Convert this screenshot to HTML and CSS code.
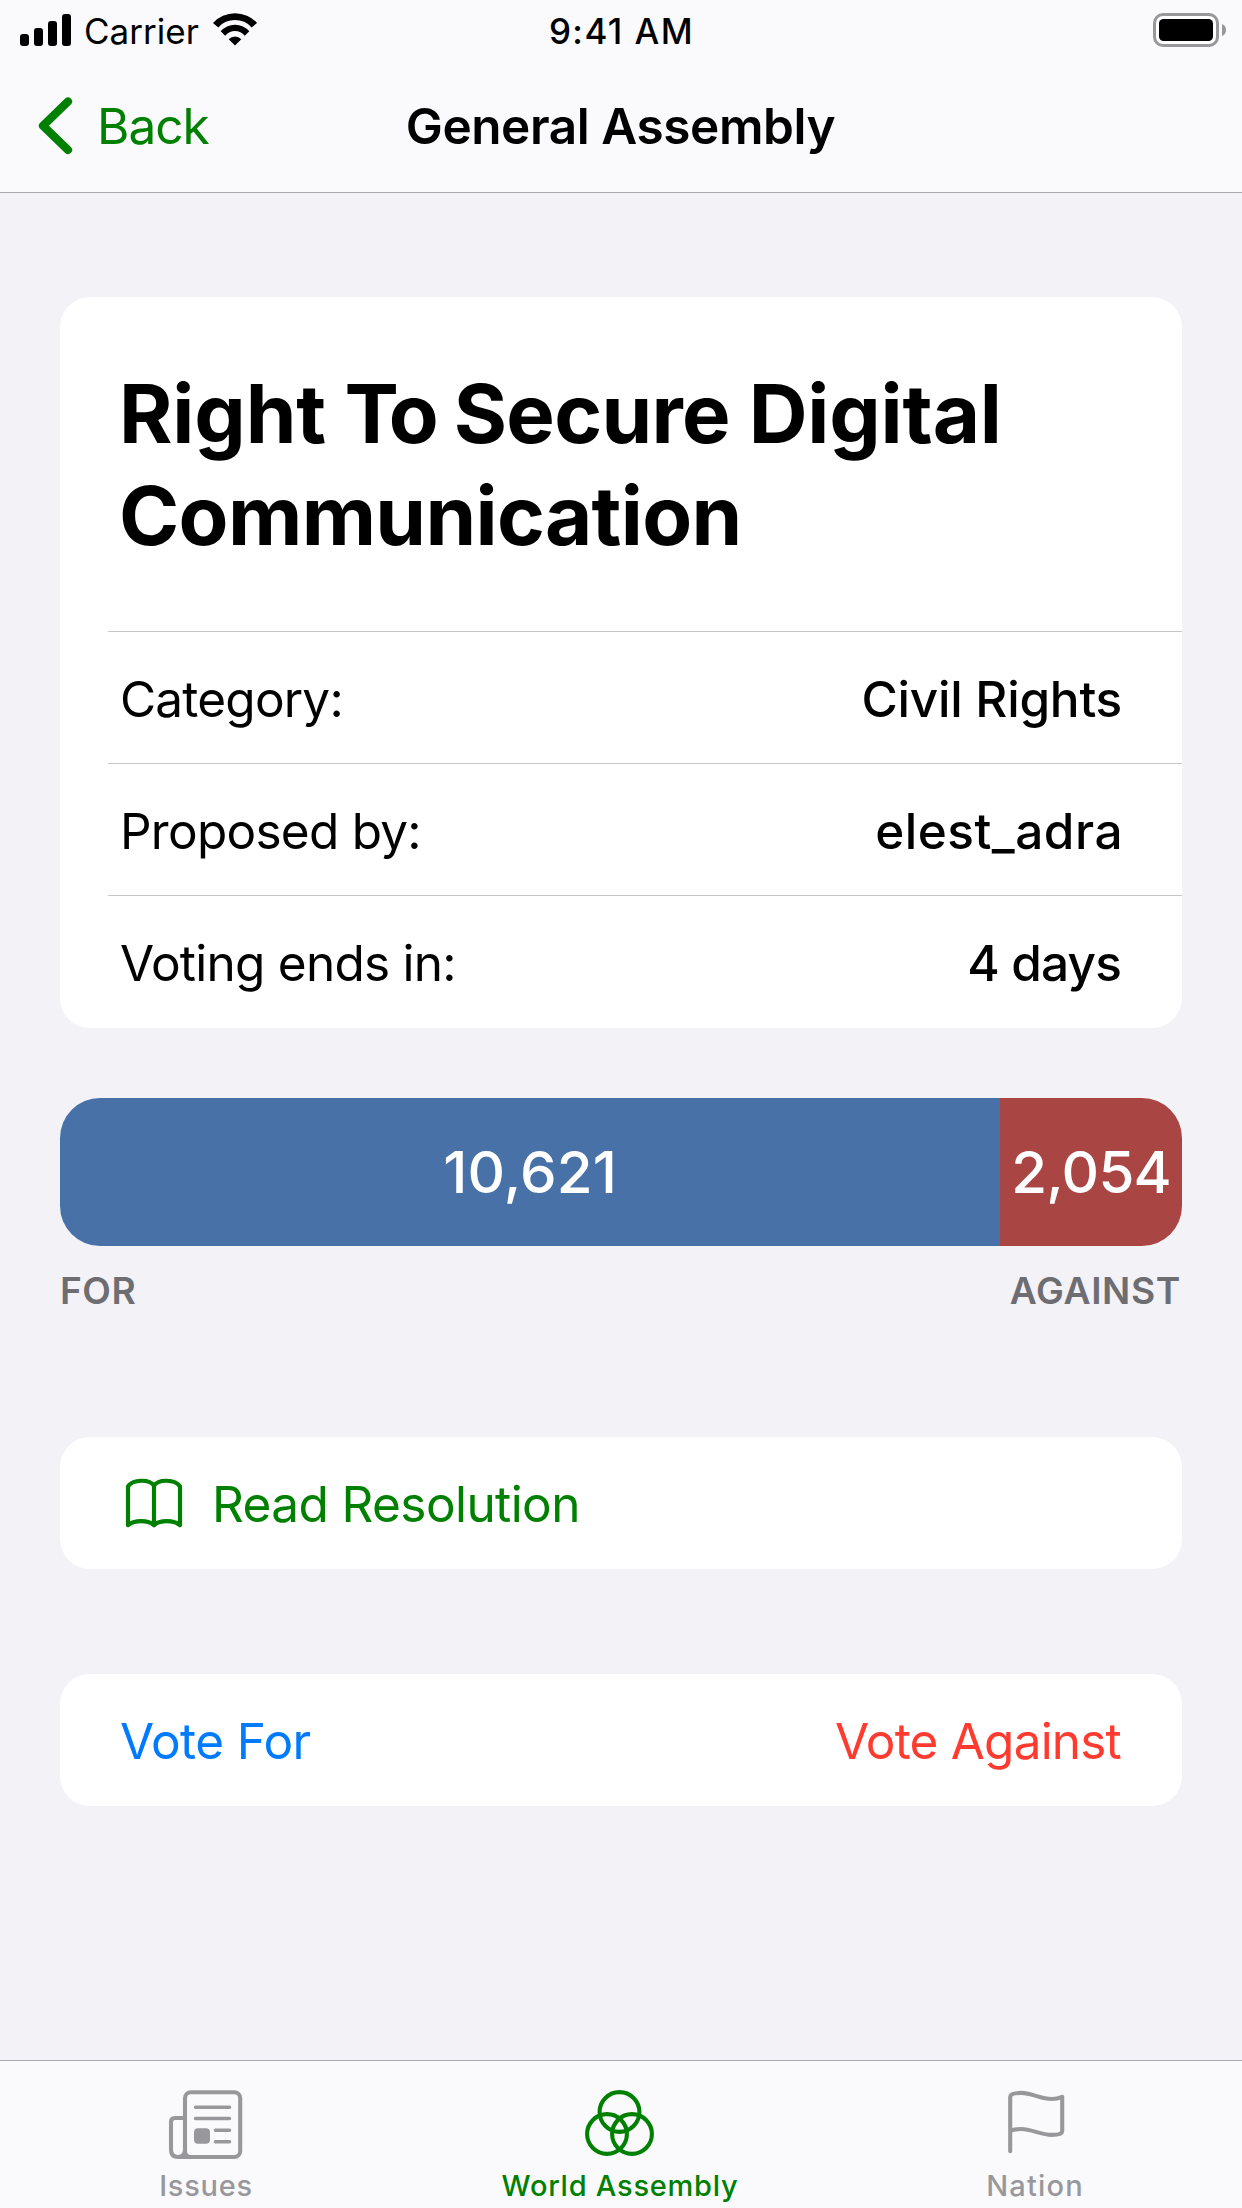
FILE: index.html
```html
<!DOCTYPE html>
<html lang="en">
<head>
<meta charset="utf-8">
<title>General Assembly</title>
<link rel="stylesheet" href="styles.css">
</head>
<body>
<div class="screen">
  <header class="header">
    <div class="status">
      <div class="status-left">
        <svg class="signal" width="52" height="33" viewBox="20 14 52 33">
          <rect x="20" y="34" width="9" height="12" rx="3"/>
          <rect x="34" y="28" width="9" height="18" rx="3"/>
          <rect x="48" y="21" width="9" height="25" rx="3"/>
          <rect x="62" y="14" width="9" height="32" rx="3"/>
        </svg>
        <span class="carrier">Carrier</span>
        <svg class="wifi" width="46" height="34" viewBox="212 13 46 34">
          <path d="M213 22.9A30 30 0 0 1 257 22.9L251.7 27.4A22.3 22.3 0 0 0 218.3 27.4Z"/>
          <path d="M220.7 31.3A18.7 18.7 0 0 1 249.3 31.3L244.8 35.7A12.5 12.5 0 0 0 225.2 35.7Z"/>
          <path d="M228.7 39.3A8.6 8.6 0 0 1 241.3 39.3L235 45.5Z"/>
        </svg>
      </div>
      <span class="time">9:41 AM</span>
      <svg class="battery" width="74" height="34" viewBox="1153 13 74 34">
        <rect class="battery-case" x="1154.5" y="14.5" width="63" height="31" rx="8.5"/>
        <rect x="1159" y="19" width="54" height="22" rx="4.5"/>
        <path class="battery-tip" d="M1222 24Q1226 25.5 1226 30T1222 36Z"/>
      </svg>
    </div>
    <nav class="nav">
      <a class="back">
        <svg width="36" height="60" viewBox="38 96 36 60"><path d="M68 101.5L43 125.8L68 150"/></svg>
        <span>Back</span>
      </a>
      <h1 class="nav-title">General Assembly</h1>
    </nav>
  </header>

  <main class="content">
    <section class="card">
      <h2 class="title"><span class="loose">Right</span> <span class="tight">To</span> Secure <span class="loose">Digital</span><br>Communication</h2>
      <dl class="rows">
        <div class="row"><dt class="k-category">Category:</dt><dd class="v-category">Civil Rights</dd></div>
        <div class="row"><dt>Proposed by:</dt><dd class="v-author">elest_adra</dd></div>
        <div class="row"><dt class="k-ends">Voting ends in:</dt><dd class="v-ends">4 days</dd></div>
      </dl>
    </section>

    <section class="tally">
      <div class="bar">
        <div class="bar-for" style="width:83.8%">10,621</div>
        <div class="bar-against"><span>2,054</span></div>
      </div>
      <div class="legend"><span class="legend-for">FOR</span><span class="legend-against">AGAINST</span></div>
    </section>

    <section class="card action read">
      <svg class="book" width="58" height="50" viewBox="125 1478 58 50">
        <path d="M154 1485.500C149.500 1479 133 1479 128 1486.500V1525.200C134 1519.800 148.500 1519.800 154 1525.200C159.500 1519.800 174 1519.800 180 1525.200V1486.500C175 1479 158.500 1479 154 1485.500V1525.200"/>
      </svg>
      <span>Read Resolution</span>
    </section>

    <section class="card action vote">
      <span class="vote-for">Vote For</span>
      <span class="vote-against">Vote Against</span>
    </section>
  </main>

  <footer class="tabs">
    <div class="tab tab-issues">
      <svg width="80" height="74" viewBox="167 2087 80 74">
        <rect x="185" y="2092.300" width="55.200" height="64.700" rx="6"/>
        <path d="M184 2118H175Q171 2118 171 2122V2149.500Q171 2157 178 2157Q185 2157 185 2149.500M178 2157H192"/>
        <path class="thin" d="M195.500 2107.300H229.500M195.500 2118.600H229.500M215.500 2130.200H229.500M215.500 2141.700H229.500"/>
        <rect class="solid" x="194" y="2128.200" width="16" height="15.500" rx="4"/>
      </svg>
      <span>Issues</span>
    </div>
    <div class="tab tab-world">
      <svg width="80" height="74" viewBox="581 2087 80 74">
        <circle cx="619.500" cy="2112" r="19.900"/>
        <circle cx="607" cy="2134" r="19.900"/>
        <circle cx="632" cy="2134" r="19.900"/>
      </svg>
      <span>World Assembly</span>
    </div>
    <div class="tab tab-nation">
      <svg width="80" height="74" viewBox="995 2087 80 74">
        <path d="M1010.200 2151.200V2097Q1010.200 2092.900 1021 2092.900C1032 2092.900 1040 2099 1052 2099Q1057 2099 1062.200 2096.800V2131Q1062.200 2134.900 1052 2134.900C1040 2134.900 1032 2129 1021 2129Q1014 2129 1010.200 2131"/>
      </svg>
      <span>Nation</span>
    </div>
  </footer>
</div>
</body>
</html>
```
FILE: styles.css
```css
* { box-sizing: border-box; margin: 0; padding: 0; }

body {
  width: 1242px;
  height: 2208px;
  overflow: hidden;
  background: #f2f2f7;
  color: #000;
  font-family: Inter, "Liberation Sans", sans-serif;
  font-size: 49.5px;
  line-height: 60px;
  white-space: nowrap;
}

svg { display: block; flex: none; }

.screen { display: flex; flex-direction: column; height: 2208px; }

/* Header */
.header { height: 193px; background: #fafafc; border-bottom: 1px solid #a9a9ae; }

.status {
  display: grid;
  grid-template-columns: 1fr auto 1fr;
  height: 60px;
  padding: 13px 15px 0 20px;
  font-size: 35px;
  line-height: 36px;
  align-items: start;
}
.status-left { display: flex; }
.signal { margin-top: 1px; }
.carrier { margin-left: 12px; width: 128px; letter-spacing: 0.02px; }
.time { font-weight: 500; letter-spacing: 1.4px; margin-left: -4px; }
.battery { justify-self: end; }
.battery-case { fill: #fff; stroke: #98989a; stroke-width: 3; }
.battery-tip { fill: #98989a; }

.nav {
  display: grid;
  grid-template-columns: 1fr auto 1fr;
  align-items: center;
  height: 132px;
  padding: 0 38px;
}
.back { display: flex; align-items: center; gap: 23px; color: #008000; letter-spacing: -1px; }
.back path { fill: none; stroke: #008000; stroke-width: 8.2; stroke-linecap: round; stroke-linejoin: round; }
.nav-title { font-size: 49.5px; font-weight: 600; letter-spacing: -0.42px; margin-left: -1px; }

/* Content */
.content { flex: 1; padding: 104px 60px 0; }
.card { background: #fff; border-radius: 30px; }

.title {
  height: 334px;
  padding: 66px 0 0 59px;
  font-size: 81.5px;
  line-height: 102px;
  font-weight: 700;
  letter-spacing: -0.67px;
}
.title .loose { letter-spacing: -0.15px; }
.title .tight { letter-spacing: -3.8px; }

.rows { margin-left: 48px; }
.row {
  display: flex;
  align-items: center;
  justify-content: space-between;
  height: 132px;
  padding: 3px 60px 0 12px;
  border-top: 1px solid #c6c6c8;
}
.row:last-child { height: 133px; padding-bottom: 1px; }
.row dt { letter-spacing: -0.74px; }
.row .k-category { letter-spacing: -0.8px; }
.row dd { font-weight: 500; }
.v-category { letter-spacing: -0.24px; }
.v-author { letter-spacing: 0.5px; margin-right: -1px; }
.v-ends { letter-spacing: -0.85px; margin-right: 1px; }

/* Vote tally */
.tally { margin-top: 70px; }
.bar {
  display: flex;
  height: 148px;
  border-radius: 40px;
  overflow: hidden;
  color: #fff;
  font-size: 58.2px;
  line-height: 148px;
  text-align: center;
}
.bar-for { background: #4771a7; font-weight: 500; letter-spacing: 0.17px; }
.bar-against { flex: 1; background: #a94644; font-weight: 500; letter-spacing: -0.79px; }
.legend {
  display: flex;
  justify-content: space-between;
  margin-top: 21px;
  padding: 0 1px 0 0;
  color: #6d6d72;
  font-size: 37.2px;
  line-height: 47px;
  font-weight: 600;
}
.legend-for { letter-spacing: 0.5px; }
.legend-against { letter-spacing: 0.64px; }

/* Actions */
.action { display: flex; align-items: center; height: 132px; padding: 2px 61px 0 60px; }
.read { margin-top: 123px; padding-left: 65px; gap: 29px; color: #008000; letter-spacing: -0.59px; }
.book { margin-top: -2px; }
.book path { fill: none; stroke: #008000; stroke-width: 4.2; stroke-linecap: round; stroke-linejoin: round; }
.vote { margin-top: 105px; justify-content: space-between; }
.vote-for { color: #007aff; letter-spacing: -0.6px; }
.vote-against { color: #ff3b30; letter-spacing: -0.8px; }

/* Tab bar */
.tabs {
  display: grid;
  grid-template-columns: repeat(3, 1fr);
  height: 148px;
  border-top: 1px solid #a9a9ae;
  background: #fafafc;
  font-size: 29px;
  line-height: 36px;
  font-weight: 500;
}
.tab { display: flex; flex-direction: column; align-items: center; gap: 7px; padding-top: 26px; color: #98989c; }
.tab svg { fill: none; stroke: currentColor; stroke-width: 4.1; stroke-linecap: round; stroke-linejoin: round; }
.tab .thin { stroke-width: 3.5; }
.tab .solid { fill: currentColor; stroke: none; }
.tab-issues { letter-spacing: 0.72px; }
.tab-issues span { margin-right: 2px; }
.tab-world { color: #008000; letter-spacing: 0.75px; }
.tab-world span { margin-right: 2px; }
.tab-nation { letter-spacing: 1.18px; }
```
